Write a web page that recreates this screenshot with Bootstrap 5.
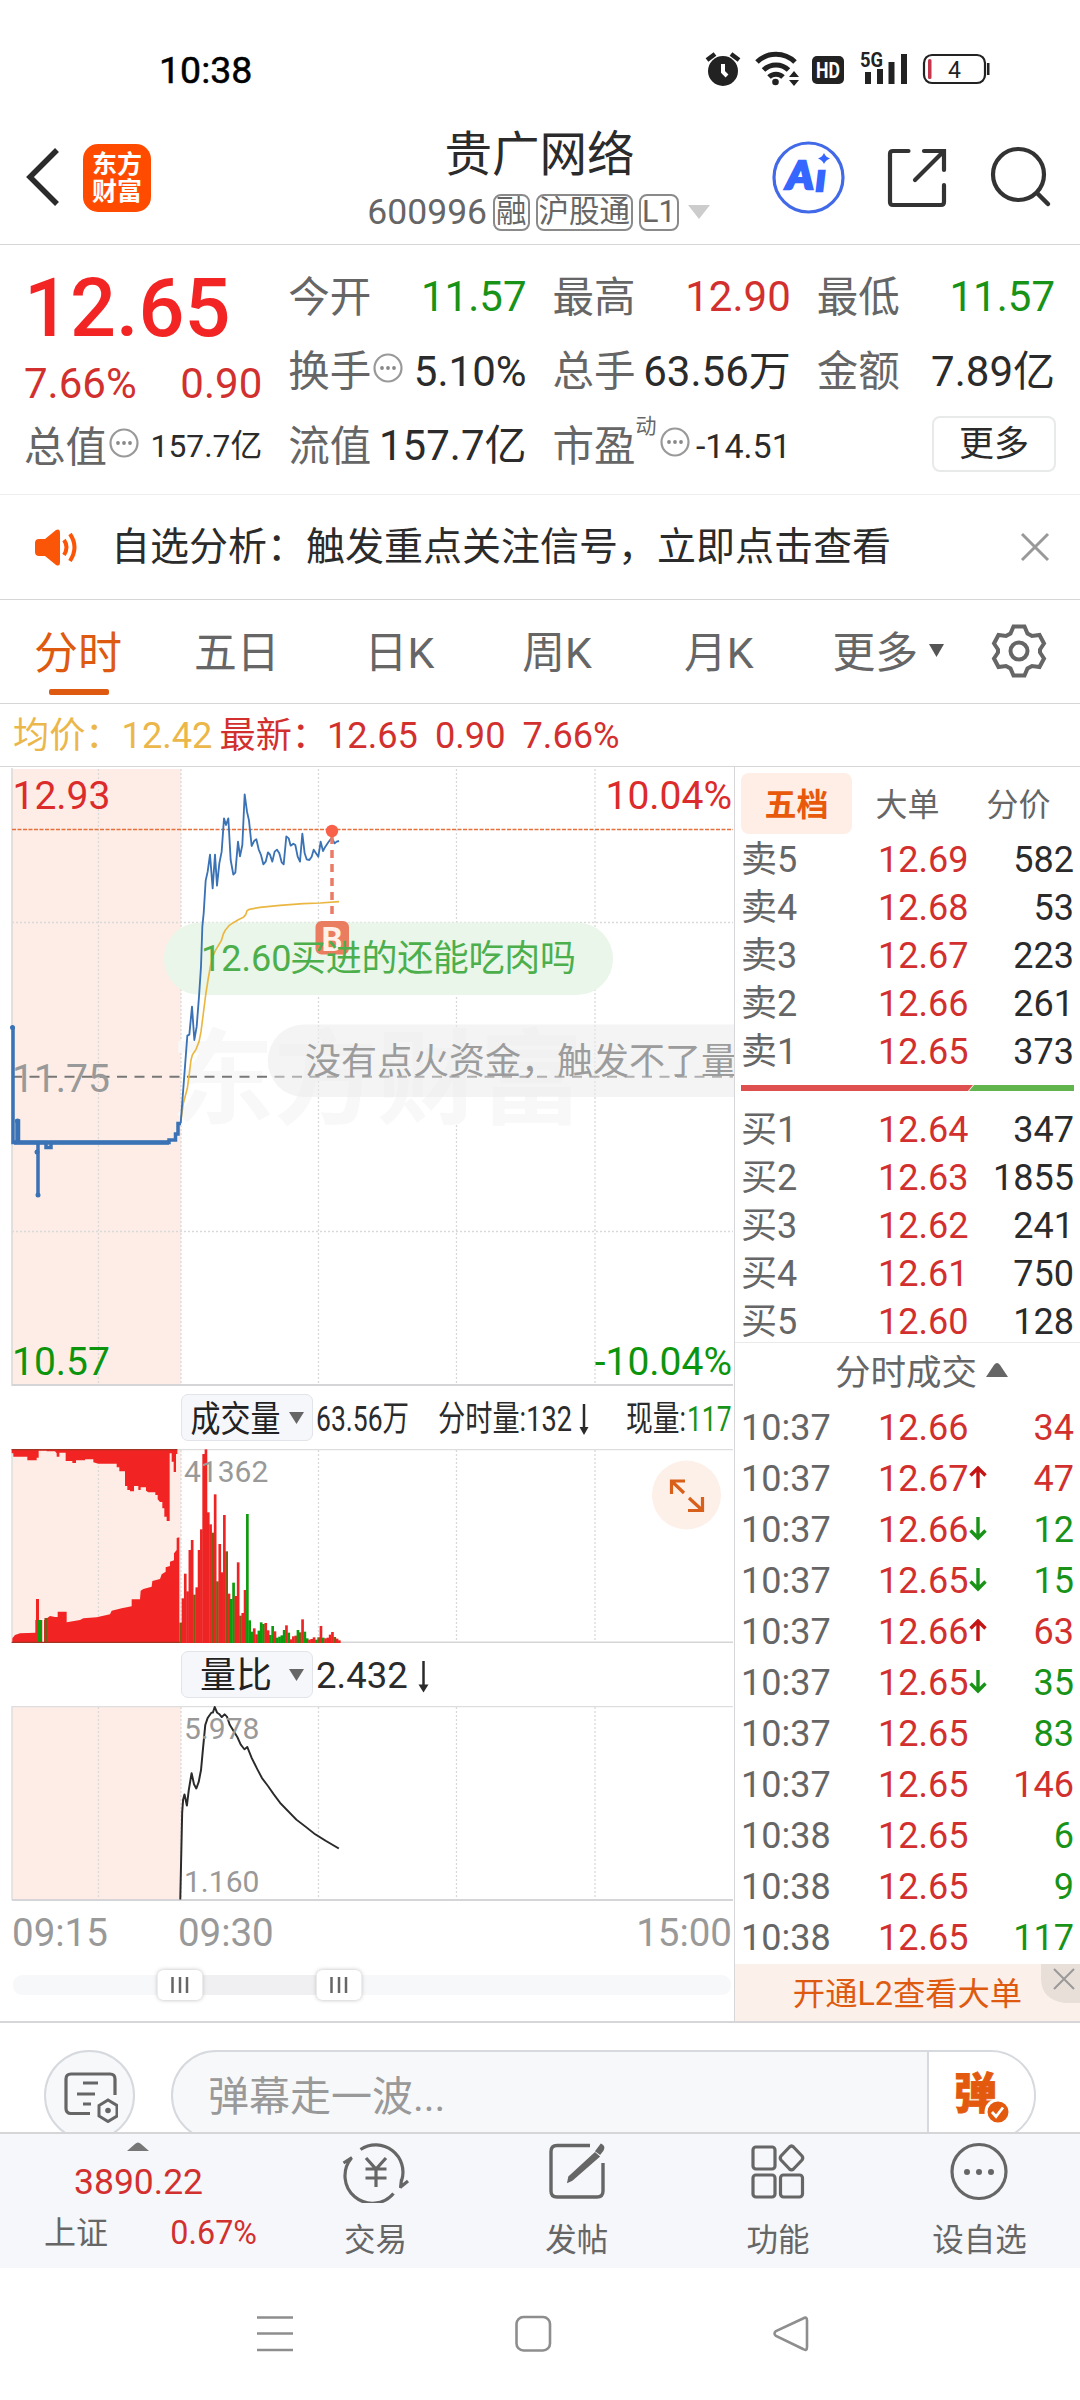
<!DOCTYPE html>
<html lang="zh-CN">
<head>
<meta charset="utf-8">
<meta name="viewport" content="width=device-width, initial-scale=1">
<title>贵广网络 600996</title>
<link href="https://cdn.jsdelivr.net/npm/bootstrap@5.3.0/dist/css/bootstrap.min.css" rel="stylesheet">
<style>
:root{--up:#d2302e;--down:#189318;--ink:#2b2b2b;--sub:#666;--mute:#999;--rule:#d6d6d8;--brand:#dd5a10}
body{font-family:Roboto,"Noto Sans CJK SC",sans-serif;line-height:1;color:var(--ink);background:#fff;width:1080px;overflow-x:hidden}
svg{display:block;flex:none}
svg text{font-family:Roboto,"Noto Sans CJK SC",sans-serif}
.up{color:var(--up)}.down{color:var(--down)}.sub{color:var(--sub)}
.statusbar{height:110px;padding:30px 90px 0 159px;color:#000}
.clock{font-size:37.5px;font-weight:400;-webkit-text-stroke:.5px #000}
.apphead{height:135px;border-bottom:1px solid var(--rule);padding:0 27px 0 26px}
.apphead .side{width:320px}
.logo{width:68px;height:68px;border-radius:15px;background:#ff4b00;color:#fff;font-size:25px;font-weight:700;line-height:27px;margin:6px 0 0 23px}
.stockname{font-size:47.5px;line-height:56px}
.code{font-size:35.5px}
.tagbox{border:2px solid #8a8a8a;border-radius:8px;height:37px;font-size:30.5px;padding:0 1px;color:#666}
.quote{height:250px;padding:15px 25px 0 24px;border-bottom:1px solid #eee;column-gap:26px}
.quote .qcol{flex:1 1 0}
.qrow{height:74.5px;font-size:42px;white-space:nowrap}
.qrow .lab{font-size:41.5px;color:var(--sub)}
.qrow.r-price{height:96px;font-size:81px;font-weight:500;color:#f22424}
.qrow.r-pct{height:55px;font-size:42px}
.qrow.r-pct + .qrow{height:72.5px}
.small-v{font-size:34px}
.small-v.sm{font-size:31.8px}
.supm{font-size:21px;align-self:flex-start;margin-top:7px;color:var(--sub)}
.btn-more{width:124px;height:56px;border:2px solid #e8eaea;border-radius:8px;font-size:35px;line-height:1;padding:0;color:var(--ink)}
.notice{height:105px;border-bottom:1px solid var(--rule);padding:0 29px 0 33px;font-size:39px}
.ktabs{height:104px;border-bottom:1px solid var(--rule);font-size:42.8px;color:var(--sub);padding-left:34px}
.ktabs .kt{height:103px;padding-top:4px}
.kt.on{font-size:44px;color:var(--brand);position:relative}
.kt.on::after{content:"";position:absolute;bottom:8px;left:15px;width:60px;height:6px;border-radius:2px;background:var(--brand)}
.avg{height:63px;border-bottom:1px solid var(--rule);font-size:36.2px;padding:2px 0 0 13px}
.main{height:1256px;border-bottom:2px solid var(--rule)}
.chartcol{width:735px;border-right:1px solid var(--rule)}
.tool{height:63px;padding-left:181px}
.sel{width:132px;height:47px;border:1px solid #e1e4e8;border-radius:7px;background:#f6f7fa;padding:0}
.axis{height:61px;font-size:38.5px;color:var(--mute);padding:3px 2px 0 12px}
.slider{height:48px}
.book{width:345px;font-size:36px;padding:0}
.book .tabs{height:66px;margin-top:6px;padding:0 6px;font-size:32px;color:var(--sub)}
.book .tabs .bt{width:111px;height:61px;border-radius:8px;padding-top:2px}
.book .tabs .on{background:#feeee6;color:#e8590c;font-weight:700}
.lv{height:48px;padding:0 6px}
.lv .n{width:137px;color:var(--sub);font-size:36px}
.lv .p{width:106px}
.tk{height:51.1px}
.feedhead{height:60px;border-top:1px solid #eaeaea;color:var(--sub);font-size:35.5px;margin-top:-4px;padding:3px 0 0 28px}
.promo{flex:1;background:#fcf0ea;color:var(--brand);font-size:32.3px;position:relative}
.promo svg{position:absolute;right:0;top:0}
.danmu{height:109px;overflow:hidden;padding:27px 44px 0}
.dset{width:91px;height:91px;border:2px solid #d6d9dd;border-radius:50%;background:#f7f8fa}
.dinput{width:865px;height:91px;border:2px solid #d6d9dd;border-radius:46px;background:#f7f8fa;font-size:41px;color:var(--mute);overflow:hidden;padding-left:35px}
.dinput .send{width:107px;height:100%;border-left:2px solid #d6d9dd;background:#fff}
.dock{height:136px;border-top:2px solid var(--rule);background:#f6f7fa;font-size:31.5px;color:var(--sub)}
.dock .it{width:201.3px}
.sysnav{height:132px}
</style>
</head>
<body>
<div class="statusbar d-flex justify-content-between align-items-start">
  <div class="clock" style="padding-top:22px">10:38</div>
  <svg width="285" height="44" viewBox="705 48 285 44" style="margin-top:18px">
    <g fill="#222"><circle cx="723" cy="71" r="15"/><path d="M707 60l8-6M731 54l8 6" stroke="#222" stroke-width="4.5"/></g>
    <path d="M723 64v8l4 4" stroke="#fff" stroke-width="4" fill="none"/>
    <g fill="none" stroke="#222" stroke-width="5"><path d="M757 62a27 27 0 0 1 38 0"/><path d="M763.500 70a18 18 0 0 1 25 0"/><path d="M769 77a10 10 0 0 1 14 0"/></g>
    <circle cx="775.500" cy="82" r="3.300" fill="#222"/><path d="M789 77l5-6 5 6zM789 80l5 6 5-6z" fill="#222"/>
    <rect x="812" y="56" width="32" height="28" rx="5" fill="#222"/>
    <text x="828" y="78" font-size="22" font-weight="700" fill="#fff" text-anchor="middle" textLength="24" lengthAdjust="spacingAndGlyphs">HD</text>
    <text x="860" y="67" font-size="20" font-weight="700" fill="#222" textLength="23" lengthAdjust="spacingAndGlyphs">5G</text>
    <path d="M868 72v12M880 69v15M891.500 62v22M904 54v30" stroke="#222" stroke-width="6"/>
    <rect x="924" y="55" width="61" height="28" rx="8" fill="none" stroke="#222" stroke-width="2.200"/><rect x="928" y="59" width="3.500" height="20" rx="1.500" fill="#c4364c"/><rect x="987" y="63" width="2.500" height="12" fill="#222"/>
    <text x="954.500" y="77.500" font-size="23" fill="#222" text-anchor="middle">4</text>
  </svg>
</div>

<header class="apphead d-flex justify-content-between">
  <div class="side d-flex" style="padding-top:28px">
    <svg width="34" height="68" viewBox="0 0 34 68" style="margin-top:6px"><path d="M31 6L4 33l27 27" fill="none" stroke="#2b2b2b" stroke-width="5.500"/></svg>
    <div class="logo text-center d-flex flex-column justify-content-center"><span>东方</span><span>财富</span></div>
  </div>
  <div class="d-flex flex-column align-items-center" style="padding-top:17px">
    <div class="stockname">贵广网络</div>
    <div class="d-flex align-items-center sub" style="height:37px;margin:11px 2px 0 0;gap:6px">
      <span class="code">600996</span>
      <span class="tagbox d-flex align-items-center">融</span><span class="tagbox d-flex align-items-center">沪股通</span><span class="tagbox d-flex align-items-center">L1</span>
      <svg width="22" height="15" style="margin-left:3px"><path d="M0 0h22l-11 14z" fill="#ccc"/></svg>
    </div>
  </div>
  <div class="side d-flex justify-content-end">
    <svg width="285" height="90" viewBox="768 135 285 90" style="margin-top:25px">
      <circle cx="808.500" cy="177.500" r="34.500" fill="none" stroke="#4169e8" stroke-width="3.200"/>
      <g fill="#3566ff" stroke="#3566ff" stroke-width="2.500" font-weight="900"><text x="786.500" y="189" font-size="38" style="font-family:Lato,sans-serif;font-style:italic" textLength="27" lengthAdjust="spacingAndGlyphs">A</text><text x="816" y="191" font-size="38" style="font-family:Lato,sans-serif;font-style:italic">ı</text></g>
      <path d="M824 153q1.500 4 6 5.500-4.500 1.500-6 5.500-1.500-4-6-5.500 4.500-1.500 6-5.500z" fill="#3566ff"/>
      <g fill="none" stroke="#333" stroke-width="4.200" stroke-linecap="round"><path d="M908.500 151H893q-3 0-3 3v48q0 3 3 3h48q3 0 3-3v-17"/><path d="M924 151h20v19M943 152l-28 28"/></g>
      <circle cx="1018.500" cy="174.500" r="25.500" fill="none" stroke="#333" stroke-width="4.200"/><path d="M1037 193l11 11" stroke="#333" stroke-width="4.500" stroke-linecap="round"/>
    </svg>
  </div>
</header>

<svg width="0" height="0" class="position-absolute"><defs><symbol id="dots" viewBox="0 0 30 30"><circle cx="15" cy="15" r="13.500" fill="none" stroke="#999" stroke-width="2.200"/><g fill="#888"><circle cx="9" cy="15" r="1.900"/><circle cx="15" cy="15" r="1.900"/><circle cx="21" cy="15" r="1.900"/></g></symbol></defs></svg>
<section class="quote d-flex">
  <div class="qcol">
    <div class="qrow r-price d-flex align-items-center">12.65</div>
    <div class="qrow r-pct d-flex align-items-center justify-content-between up"><span>7.66%</span><span>0.90</span></div>
    <div class="qrow d-flex align-items-center justify-content-between"><span class="d-flex align-items-center"><span class="lab">总值</span><svg width="30" height="30" class="mb-2" style="margin-left:2px"><use href="#dots"/></svg></span><span class="small-v sm">157.7亿</span></div>
  </div>
  <div class="qcol">
    <div class="qrow d-flex align-items-center justify-content-between"><span class="lab">今开</span><span class="down">11.57</span></div>
    <div class="qrow d-flex align-items-center justify-content-between"><span class="d-flex align-items-center"><span class="lab">换手</span><svg width="30" height="30" class="mb-2" style="margin-left:2px"><use href="#dots"/></svg></span><span>5.10%</span></div>
    <div class="qrow d-flex align-items-center justify-content-between"><span class="lab">流值</span><span>157.7亿</span></div>
  </div>
  <div class="qcol">
    <div class="qrow d-flex align-items-center justify-content-between"><span class="lab">最高</span><span class="up">12.90</span></div>
    <div class="qrow d-flex align-items-center justify-content-between"><span class="lab">总手</span><span>63.56万</span></div>
    <div class="qrow d-flex align-items-center"><span class="lab">市盈</span><span class="supm">动</span><svg width="30" height="30" class="mb-2" style="margin-left:3px"><use href="#dots"/></svg><span class="small-v ms-auto">-14.51</span></div>
  </div>
  <div class="qcol">
    <div class="qrow d-flex align-items-center justify-content-between"><span class="lab">最低</span><span class="down">11.57</span></div>
    <div class="qrow d-flex align-items-center justify-content-between"><span class="lab">金额</span><span>7.89亿</span></div>
    <div class="qrow d-flex align-items-center justify-content-end"><button class="btn btn-more" style="margin:-4px -1px 0 0">更多</button></div>
  </div>
</section>

<section class="notice d-flex align-items-center">
  <svg width="46" height="38" viewBox="32 527 46 38"><path d="M38 538h6l11-9q4-2 4 3v29q0 5-4 3l-11-9h-6q-4 0-4-4v-9q0-4 4-4z" fill="#fb5607"/><path d="M63 539q5 7 0 15M69 533q9 13 0 27" fill="none" stroke="#fb5607" stroke-width="4"/></svg>
  <span style="margin-left:32px">自选分析：触发重点关注信号，立即点击查看</span>
  <svg width="32" height="32" class="ms-auto"><path d="M3 3l26 26M29 3L3 29" stroke="#999" stroke-width="3"/></svg>
</section>

<nav class="ktabs d-flex">
  <div class="kt on d-flex align-items-center">分时</div>
  <div class="kt d-flex align-items-center" style="margin-left:72px">五日</div>
  <div class="kt d-flex align-items-center" style="margin-left:85px">日K</div>
  <div class="kt d-flex align-items-center" style="margin-left:88px">周K</div>
  <div class="kt d-flex align-items-center" style="margin-left:92px">月K</div>
  <div class="kt d-flex align-items-center" style="margin-left:79px">更多<svg width="15" height="13" style="margin:-6px 0 0 11px"><path d="M0 0h15L7.500 13z" fill="#555"/></svg></div>
  <svg width="56" height="56" viewBox="-28 -28 56 56" style="margin:23px 33px 0 auto"><path d="M-5.500 -24.500H5.500L8.500 -17.500L13 -15L20.500 -16L25 -7.500L21 -1.500V1.500L25 7.500L20.500 16L13 15L8.500 17.500L5.500 24.500H-5.500L-8.500 17.500L-13 15L-20.500 16L-25 7.500L-21 1.500V-1.500L-25 -7.500L-20.500 -16L-13 -15L-8.500 -17.500Z" fill="none" stroke="#666" stroke-width="4"/><circle r="8.500" fill="none" stroke="#666" stroke-width="4"/></svg>
</nav>

<div class="avg d-flex align-items-center"><span style="color:#ebb74b">均价：<span>12.42</span></span><span class="up" style="margin-left:7px">最新：<span style="margin-left:-1px">12.65</span><span style="margin-left:17px">0.90</span><span style="margin-left:17px">7.66%</span></span></div>

<main class="main d-flex">
  <div class="chartcol">
    <svg width="734" height="619" viewBox="0 767 734 619">
      <rect x="12" y="769" width="169" height="616" fill="#fdede6"/>
      <g stroke="#d9d9d9" stroke-width="1.300" stroke-dasharray="2 2"><path d="M98.500 769V1384M181 769V1384M318.500 769V1384M456.500 769V1384M595 769V1384M12 922.500H733M12 1231.500H733"/></g>
      <path d="M12 768V1386" stroke="#d8d8d8" stroke-width="1.500"/><path d="M12 1385H733" stroke="#d5d5d8" stroke-width="2"/>
      <text x="171" y="1116" font-size="103" font-weight="700" fill="#f8f8f8" textLength="412">东方财富</text>
      <path d="M12 829.500H733" stroke="#e5703c" stroke-width="1.500" stroke-dasharray="4 1.500"/>
      <path d="M12 1076.700H733" stroke="#777" stroke-width="2" stroke-dasharray="10 7.500"/>
      <rect x="164" y="922.500" width="449" height="72.500" rx="36" fill="#e9f6e9"/>
      <path d="M304 1024.500H734V1097H304a36 36 0 0 1 0-72.500z" fill="#e9e9e9" fill-opacity=".5"/>
      <g transform="translate(160 780) scale(.33333)" fill="none" stroke-linejoin="round">
        <path d="M62 1025L70 970L82 925L88 880L93 840L97 825L108 808L117 785L123 755L130 700L137 645L144 600L152 555L160 525L168 508L176 495L184 482L190 462L197 449L207 437L220 428L235 419L250 412L257 404L261 392L268 388L300 382L360 376L430 371L480 369L537 365" stroke="#ebb743" stroke-width="5"/>
        <path d="M62 1030L82 767L88 764L96 680L103 780L110 740L117 650L123 560L127 440L131 400L137 302L143 275L150 224L158 325L165 224L171 317L178 250L185 215L192 115L198 135L205 115L212 240L220 284L226 278L234 185L240 229L247 195L254 43L261 95L267 122L275 198L283 182L289 178L296 208L303 225L310 253L317 245L324 217L330 224L337 245L344 215L351 209L358 220L365 247L371 253L379 169L386 175L392 197L400 191L406 195L413 230L420 245L427 161L434 220L440 238L448 240L455 230L461 209L468 220L475 230L482 185L489 213L496 200L505 187L513 176L518 178L524 190L530 185L537 183" stroke="#3a72b5" stroke-width="5.500"/>
      </g>
      <path d="M13 1027V1142.500H17V1121H18.500V1142.500H38V1195V1142.500H46V1147.500H51V1142.500H169V1140H175.500V1134H178V1123.500H181" fill="none" stroke="#3a72b5" stroke-width="3.500"/>
      <path d="M14 1142.500H169" stroke="#3a72b5" stroke-width="4.500"/>
      <g fill="#3a72b5"><circle cx="12.500" cy="1027.500" r="2.500"/><circle cx="38" cy="1195" r="2.500"/><circle cx="37" cy="1152" r="2.500"/><circle cx="17.500" cy="1121" r="2.500"/></g>
      <g font-size="39"><text x="12.500" y="809" fill="#dc2b2b">12.93</text><text x="732" y="809" text-anchor="end" fill="#dc2b2b">10.04%</text><text x="12" y="1092" fill="#999">11.75</text><text x="12" y="1375" fill="#0c950c">10.57</text><text x="732" y="1375" text-anchor="end" fill="#0c950c">-10.04%</text></g>
      <path d="M332 836V920" stroke="#ea7b66" stroke-width="3.500" stroke-dasharray="8 6"/>
      <circle cx="332" cy="831" r="6.200" fill="#f8604a"/>
      <rect x="315.500" y="921" width="33.500" height="33.500" rx="6" fill="#ea7d60"/><text x="332" y="950.500" font-size="33" font-weight="700" fill="#fff1ea" text-anchor="middle">B</text>
      <text x="201" y="971" font-size="36" fill="#4caf4c"><tspan>12.60</tspan><tspan x="290" textLength="286">买进的还能吃肉吗</tspan></text>
      <text x="305" y="1073.500" font-size="36" fill="#9c9c9c">没有点火资金，触发不了量</text>
    </svg>

    <div class="tool d-flex align-items-center">
      <button class="btn sel"><svg width="130" height="45" viewBox="182 1394 130 45"><text x="190.500" y="1430.500" font-size="36" fill="#222" textLength="90" lengthAdjust="spacingAndGlyphs">成交量</text><path d="M289 1411h15l-7.500 12z" fill="#666"/></svg></button>
      <svg width="420" height="50" viewBox="313 1393 420 50" font-size="35.500" fill="#2b2b2b"><text x="316" y="1431" textLength="93" lengthAdjust="spacingAndGlyphs">63.56万</text><text x="438" y="1431" textLength="134" lengthAdjust="spacingAndGlyphs">分时量:132</text><path d="M584 1404V1429" stroke="#2b2b2b" stroke-width="2.500"/><path d="M579.500 1427h9l-4.500 8z"/><text x="626" y="1431" textLength="60" lengthAdjust="spacingAndGlyphs">现量:</text><text x="687" y="1431" textLength="44.500" lengthAdjust="spacingAndGlyphs" fill="#189318">117</text></svg>
    </div>

    <svg width="734" height="194" viewBox="0 1449 734 194">
      <rect x="12" y="1449" width="169" height="194" fill="#fdede6"/>
      <g stroke="#d9d9d9" stroke-width="1.300" stroke-dasharray="2 2"><path d="M98.500 1450V1642M181 1450V1642M318.500 1450V1642M456.500 1450V1642M595 1450V1642"/></g>
      <path d="M12 1449.500H733M12 1449V1643" stroke="#dedede" stroke-width="1.500"/><path d="M12 1642.300H733" stroke="#d5d5d8" stroke-width="1.600"/>
      <g transform="translate(0 1380) scale(.33333)">
        <path fill="#f22323" d="M35 208V220H40V230H82V241H110V233H116V212H140V214H165L170 220V230H178V218H197V243H217V249H228V241H255V238H280V247L295 251H350V262H358V274H375V318H382V330H390V334H402V318H415V330H422V322H438V332L445 337H466V345H473V358L480 366H487V385H493V410H500V423H509V220H515V245H521V276H528V222H532V208Z"/>
        <path fill="#f22323" d="M37 787V775L45 765L60 760L106 758V720H108V657H117V720H134V714H142L150 708L165 711H173V695H200V727L240 720L250 715L290 712L330 703L335 692L365 685L395 679V658H420L422 632L430 627L455 620L457 603L480 597L485 583L497 575V562L510 558V545L522 541V520L530 510V474L538 472V787Z"/>
        <path fill="#0d9b0d" d="M114 720h12v67h-12z"/><path fill="#fff" d="M127 718h5v69h-5z"/><path fill="#716019" d="M134 714h7v73h-7z"/>
        <path d="M35 209H532M35 787H540" stroke="#a33322" stroke-width="4"/>
        <g id="bars"></g>
      </g>
      <text x="184" y="1481.500" font-size="30" fill="#999">41362</text>
      <circle cx="686.500" cy="1495" r="34.500" fill="#fdf0e8"/>
      <g fill="none" stroke="#d9601a" stroke-width="3.200"><path d="M671.500 1494V1481H685M672 1481.500L684 1493M702.500 1497V1510.500H688M702 1510L689 1498"/></g>
    </svg>

    <div class="tool d-flex align-items-center">
      <button class="btn sel"><svg width="130" height="45" viewBox="182 1652 130 45"><text x="200" y="1688" font-size="36" fill="#222">量比</text><path d="M289 1669h15l-7.500 12z" fill="#666"/></svg></button>
      <svg width="420" height="50" viewBox="313 1650 420 50" fill="#2b2b2b"><text x="316" y="1687.500" font-size="36.500">2.432</text><path d="M423.500 1661V1687" stroke="#2b2b2b" stroke-width="2.500"/><path d="M418.500 1684.500h10l-5 8z"/></svg>
    </div>

    <svg width="734" height="195" viewBox="0 1706 734 195">
      <rect x="12" y="1706" width="169" height="194" fill="#fdede6"/>
      <g stroke="#d9d9d9" stroke-width="1.300" stroke-dasharray="2 2"><path d="M98.500 1707V1899M181 1707V1899M318.500 1707V1899M456.500 1707V1899M595 1707V1899"/></g>
      <path d="M12 1706.500H733M12 1706V1900" stroke="#dedede" stroke-width="1.500"/><path d="M12 1900H733" stroke="#d5d5d8" stroke-width="2"/>
      <path transform="translate(0 1380) scale(.47192 .40816)" d="M382 1273L386 1060L388 1028L391 1015L396 1043L400 1005L406 963L411 990L416 1001L421 985L426 955L430 905L435 845L440 828L448 815L451 815L455 801L460 815L465 819L470 826L476 819L481 825L487 845L495 860L503 875L510 893L518 905L524 899L533 925L545 953L555 975L568 995L580 1015L595 1038L612 1058L628 1077L648 1095L668 1113L690 1129L718 1148" fill="none" stroke="#2a2a2a" stroke-width="4.200" stroke-linejoin="round"/>
      <g font-size="30" fill="#999"><text x="184" y="1739">5.978</text><text x="184" y="1891.500">1.160</text></g>
    </svg>

    <div class="axis d-flex align-items-center"><span>09:15</span><span style="margin-left:70px">09:30</span><span class="ms-auto">15:00</span></div>
    <svg class="slider" width="734" height="48" viewBox="0 1962 734 48">
      <rect x="13" y="1975" width="718" height="20" rx="9" fill="#f7f8fa"/><rect x="180" y="1975" width="160" height="20" fill="#f0f0f2"/>
      <g fill="#fff" style="filter:drop-shadow(0 0 2px #bbb)"><rect x="157.500" y="1970" width="45" height="30" rx="6"/><rect x="316.500" y="1970" width="45" height="30" rx="6"/></g>
      <path d="M172.500 1977v16M180 1977v16M187 1977v16M331.500 1977v16M339 1977v16M346 1977v16" stroke="#666" stroke-width="2.500"/>
    </svg>
  </div>

  <aside class="book d-flex flex-column">
    <div class="tabs d-flex"><div class="bt on d-flex align-items-center justify-content-center">五档</div><div class="bt d-flex align-items-center justify-content-center">大单</div><div class="bt d-flex align-items-center justify-content-center">分价</div></div>
    <div style="margin-top:-3px" id="asks"></div>
    <div class="d-flex" style="padding:9px 6px 0;height:30px"><svg width="333" height="6"><path d="M0 0h232l-5 6H0z" fill="#de5050"/><path d="M233 0h100v6H228z" fill="#62b44c"/></svg></div>
    <div id="bids"></div>
    <div class="feedhead d-flex align-items-center justify-content-center">分时成交<svg width="22" height="15" style="margin:-10px 0 0 9px"><path d="M0 15h22L14 3q-3-4-6 0z" fill="#666"/></svg></div>
    <div id="ticks"></div>
    <div class="promo d-flex align-items-center justify-content-center"><span style="padding-top:3px">开通L2查看大单</span><svg width="39" height="39"><path d="M0 0h39v39H24Q0 36 0 14z" fill="#e9dfd9"/><path d="M13 5l20 20M33 5L13 25" stroke="#999" stroke-width="2"/></svg></div>
  </aside>
</main>

<section class="danmu d-flex justify-content-between align-items-start">
  <div class="dset d-flex align-items-center justify-content-center flex-shrink-0"><svg width="56" height="54" viewBox="62 2069 56 54"><path d="M90 2113.500H71q-5 0-5-5V2079q0-5 5-5H110q5 0 5 5V2095" fill="none" stroke="#666" stroke-width="3.200"/><path d="M83 2083h15M77 2094h18M83 2104h8" stroke="#666" stroke-width="3.200"/><path d="M108 2100l9 5.500v10.500l-9 5.500-9-5.500v-10.500z" fill="#f7f8fa" stroke="#666" stroke-width="3"/><circle cx="108" cy="2110.500" r="2.800" fill="#666"/></svg></div>
  <div class="dinput d-flex align-items-center flex-shrink-0"><span style="padding-top:3px">弹幕走一波...</span>
    <div class="send ms-auto"><svg width="105" height="87" viewBox="928 2051 105 87"><text x="953" y="2108" font-size="43" font-weight="900" fill="#e35a0e" stroke="#e35a0e" stroke-width=".8">弹</text><circle cx="997" cy="2111" r="12" fill="#e35a0e" stroke="#fff" stroke-width="3"/><path d="M991 2111l4 4.500 7-9" fill="none" stroke="#fff" stroke-width="2.800"/></svg></div>
  </div>
</section>

<nav class="dock d-flex">
  <div style="width:275px;padding:8px 18px 0 44px">
    <svg width="22" height="9" class="mx-auto" style="position:relative;left:-12px"><path d="M0 9h22L14 2q-3-3-6 0z" fill="#777"/></svg>
    <div class="up" style="font-size:35.500px;margin:14px 0 0 30px">3890.22</div>
    <div class="d-flex justify-content-between" style="margin-top:16px"><span style="font-size:32px">上证</span><span class="up" style="font-size:32.300px">0.67%</span></div>
  </div>
  <div class="it d-flex flex-column align-items-center"><svg width="70" height="62" viewBox="-35 -31 70 62" style="margin-top:7px"><g fill="none" stroke="#666" stroke-width="3.200"><path d="M-15.500 -22.500A27.300 27.300 0 0 1 25.500 9M17.500 21.500A27.300 27.300 0 0 1 -24.500 -14M-32.500 -9l8.500-5.500M24 15.500l8-6.500M25.500 7.500L24.500 16"/><path d="M-10 -14L0 -3L10 -14M0 -3V15M-10.500 -3H10.500M-10.500 6H10.500"/></g></svg><span style="margin-top:22px">交易</span></div>
  <div class="it d-flex flex-column align-items-center"><svg width="70" height="62" viewBox="-35 -31 70 62" style="margin-top:7px"><path d="M13 -26.500H-20q-6 0-6 6V19q0 6 6 6H20q6 0 6-6V-9" fill="none" stroke="#666" stroke-width="3.400"/><path d="M24 -27.500q4 2 2 5.500l-3 4-4-3zM18 -19l4 3.500L-5 8l-4 2 1-5z" fill="#666" stroke="#666" stroke-width="1.500"/></svg><span style="margin-top:22px">发帖</span></div>
  <div class="it d-flex flex-column align-items-center"><svg width="70" height="62" viewBox="-35 -31 70 62" style="margin-top:7px"><g fill="none" stroke="#666" stroke-width="3.200"><rect x="-25" y="-25" width="22" height="22" rx="3"/><rect x="-25" y="3" width="22" height="22" rx="3"/><rect x="2.500" y="3" width="22" height="22" rx="3"/><path d="M12 -24.500q2-2 4 0l8.500 9q1.500 2 0 4L16 -2.500q-2 2-4 0l-8.500 -9q-1.500-2 0-4z" transform="translate(-.5 -.5)"/></g></svg><span style="margin-top:22px">功能</span></div>
  <div class="it d-flex flex-column align-items-center"><svg width="70" height="62" viewBox="-35 -31 70 62" style="margin-top:7px"><circle r="27" cy="-.5" fill="none" stroke="#666" stroke-width="3.200"/><g fill="#666"><circle cx="-12" r="3"/><circle r="3"/><circle cx="12" r="3"/></g></svg><span style="margin-top:22px">设自选</span></div>
</nav>

<div class="sysnav d-flex align-items-center justify-content-center">
  <svg width="560" height="40" viewBox="255 2314 560 40" style="margin-left:-10px"><g fill="none" stroke="#8e8e8e" stroke-width="2.600"><path d="M257 2317.500h36M257 2333.500h36M257 2350h36"/><rect x="516.500" y="2317" width="33.500" height="33.500" rx="7"/><path d="M803 2318.500q4-2.500 4 2v26.500q0 4.500-4 2L776 2336q-3-2.500 0-5z"/></g></svg>
</div>

<script src="https://cdn.jsdelivr.net/npm/bootstrap@5.3.0/dist/js/bootstrap.bundle.min.js"></script>
<script>
const level=(n,p,q)=>`<div class="lv d-flex align-items-center"><span class="n">${n}</span><span class="p up">${p}</span><span class="ms-auto">${q}</span></div>`;
const asks=[['卖5','12.69',582],['卖4','12.68',53],['卖3','12.67',223],['卖2','12.66',261],['卖1','12.65',373]];
const bids=[['买1','12.64',347],['买2','12.63',1855],['买3','12.62',241],['买4','12.61',750],['买5','12.60',128]];
document.getElementById('asks').innerHTML=asks.map(r=>level(...r)).join('');
document.getElementById('bids').innerHTML=bids.map(r=>level(...r)).join('');
const arrow={u:'<path d="M9 22V2M1.500 9.500L9 2L16.500 9.500" stroke="#c41414"/>',d:'<path d="M9 0V21M1.500 13.500L9 21L16.500 13.500" stroke="#189318"/>'};
const ticks=[['10:37','12.66',34,'up'],['10:37','12.67',47,'up','u'],['10:37','12.66',12,'down','d'],['10:37','12.65',15,'down','d'],['10:37','12.66',63,'up','u'],['10:37','12.65',35,'down','d'],['10:37','12.65',83,'down'],['10:37','12.65',146,'up'],['10:38','12.65',6,'down'],['10:38','12.65',9,'down'],['10:38','12.65',117,'down']];
document.getElementById('ticks').innerHTML=ticks.map(([t,p,q,c,a])=>`<div class="lv tk d-flex align-items-center"><span class="n">${t}</span><span class="p up d-flex align-items-center" style="white-space:nowrap">${p}${a?`<svg width="18" height="24" fill="none" stroke-width="3.400" style="margin:-2px 0 0 1px">${arrow[a]}</svg>`:''}</span><span class="ms-auto ${c}">${q}</span></div>`).join('');
/* per-minute volume: bar top, colour key */
const vol='728o 655r 581r 634r 510r 480r 644o 622r 510r 448r 222r 208r 397r 433r 458o 343r 604o 492r 577r 405r 514o 641r 657g 608g 648r 547r 707o 699r 630r 402g 721g 755g 745r 763r 752g 727g 732g 729r 751r 765g 738g 754r 773g 770g 766g 750g 736r 758g 778r 769r 767r 750g 757o 718r 755g 775g 779r 777r 772r 779g 772o 738r 773g 775r 773r 764r 756r 771o 776r 781r'.split(' ');
const fill={r:'#ee2424',g:'#0d9b0d',o:'#7d5c13'};
document.getElementById('bars').innerHTML=vol.map((v,i)=>{const y=parseInt(v);return `<rect x="${(538+i*6.9).toFixed(1)}" y="${y}" width="8" height="${789-y}" fill="${fill[v.slice(-1)]}"/>`}).join('');
</script>
</body>
</html>
